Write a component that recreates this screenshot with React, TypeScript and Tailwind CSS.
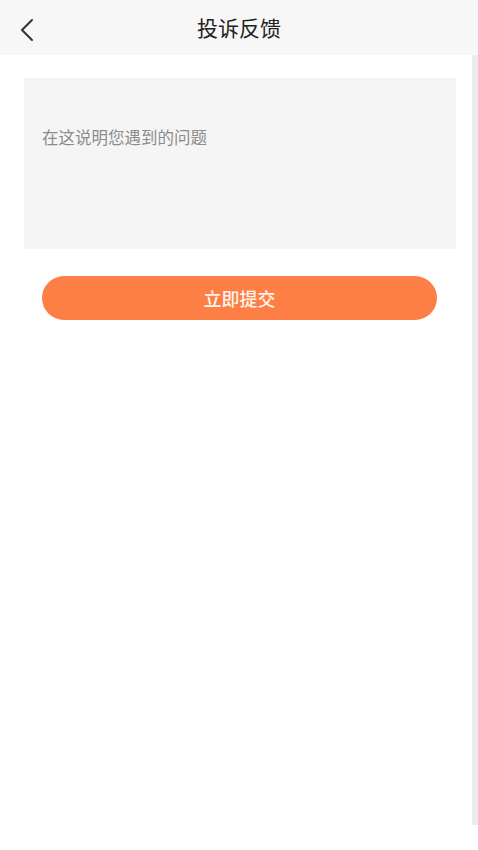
import { useState } from "react";

function BackIcon() {
  return (
    <svg width="16" height="24" viewBox="0 0 16 24" fill="none">
      <path d="M13 2 L3 12 L13 22" stroke="#333333" strokeWidth="2" strokeLinecap="round" strokeLinejoin="round" />
    </svg>
  );
}

export default function App() {
  const [text, setText] = useState("");
  return (
    <div
      className="w-[478px] min-h-[850px] bg-white"
      style={{ fontFamily: '"Noto Sans CJK SC", "Noto Sans", sans-serif' }}
    >
      <div className="h-[55px] bg-[#f7f7f7] flex items-center relative">
        <button className="absolute left-[19px] top-[18px] flex items-center">
          <BackIcon />
        </button>
        <div className="w-full text-center text-[21px] text-[#222222] leading-none">投诉反馈</div>
      </div>
      <div className="flex">
        <div className="flex-1 pl-[24px] pr-[16px]">
          <textarea
            value={text}
            onChange={(e) => setText(e.target.value)}
            placeholder="在这说明您遇到的问题"
            className="mt-[23px] block w-full h-[171px] bg-[#f5f5f5] resize-none outline-none pl-[18px] pr-[18px] pt-[47px] text-[16.5px] leading-[24px] text-[#333333] placeholder:text-[#8c8c8c]"
          />
          <button className="mt-[27px] ml-[18px] w-[395px] h-[44px] rounded-full bg-[#fd7f46] text-[#fff4ee] text-[18px] font-medium flex items-center justify-center">
            立即提交
          </button>
        </div>
        <div className="w-[6px] h-[770px] bg-[#ececec]" />
      </div>
    </div>
  );
}
